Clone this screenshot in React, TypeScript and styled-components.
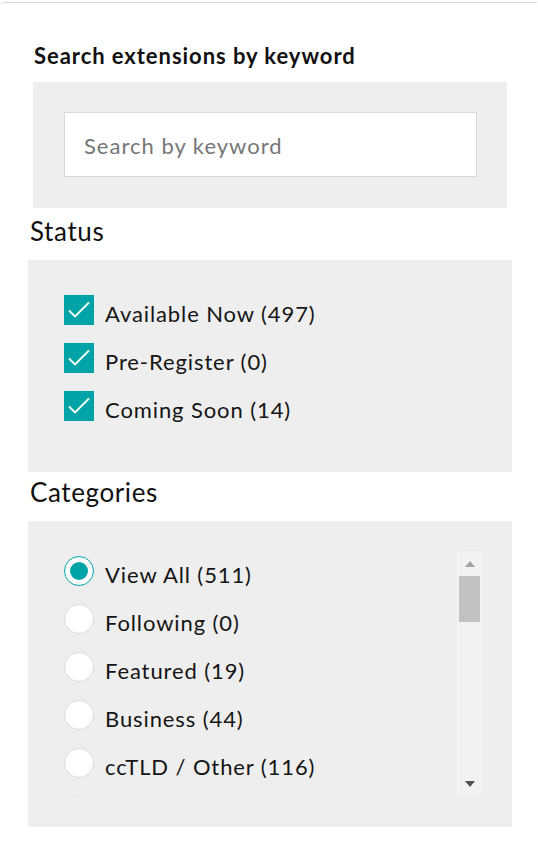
import React from "react";
import styled, { createGlobalStyle } from "styled-components";

const GlobalStyle = createGlobalStyle`
  html, body { margin: 0; padding: 0; background: #ffffff; }
  body { font-family: Lato, "Open Sans", Arial, sans-serif; color: #111111; }
  * { box-sizing: border-box; }
`;

const Card = styled.div`
  margin-top: 2px;
  border-top: 1px solid #d4dbe0;
  border-top-left-radius: 5px;
  width: 537px;
  padding-top: 39px;
  padding-bottom: 22px;
`;

const SearchSection = styled.section`
  margin-left: 33px;
  width: 474px;
`;

const SearchTitle = styled.h2`
  margin: 0 0 0 1px;
  height: 40px;
  font-size: 22px;
  line-height: 28px;
  font-weight: 700;
  letter-spacing: 0.95px;
  color: #111111;
`;

const Panel = styled.div<{ $pt: number; $pb: number; $pl: number; $pr: number }>`
  background: #eeeeee;
  padding: ${(p) => `${p.$pt}px ${p.$pr}px ${p.$pb}px ${p.$pl}px`};
`;

const SearchInput = styled.input`
  display: block;
  width: 100%;
  height: 65px;
  border: 1px solid #d4dbe0;
  background: #ffffff;
  padding: 2px 19px 0;
  font-family: Lato, "Open Sans", Arial, sans-serif;
  font-size: 22px;
  letter-spacing: 1px;
  color: #111111;
  outline: none;
  &::placeholder { color: #767676; }
`;

const FilterSection = styled.section`
  margin-left: 28px;
  width: 484px;
`;

const FilterTitle = styled.h3<{ $mt: number }>`
  margin: ${(p) => p.$mt}px 0 13px 2px;
  font-size: 26px;
  line-height: 32px;
  font-weight: 400;
  letter-spacing: 0.6px;
  color: #111111;
`;

const OptionList = styled.div`
  display: flex;
  flex-direction: column;
  gap: 18px;
`;

const OptionRow = styled.label`
  display: flex;
  align-items: flex-start;
  height: 30px;
  gap: 11px;
  cursor: pointer;
`;

const OptionText = styled.span`
  font-size: 22px;
  line-height: 24px;
  padding-top: 7px;
  letter-spacing: 0.9px;
  color: #151515;
  white-space: nowrap;
`;

const CheckBox = styled.span`
  flex: none;
  width: 30px;
  height: 30px;
  background: #00a4a6;
  display: flex;
  align-items: center;
  justify-content: center;
`;

const RadioCircle = styled.span<{ $checked: boolean }>`
  flex: none;
  width: 30px;
  height: 30px;
  border-radius: 50%;
  background: #ffffff;
  border: 1px solid ${(p) => (p.$checked ? "#00a4a6" : "#d6dce1")};
  display: flex;
  align-items: center;
  justify-content: center;
  &::after {
    content: "";
    display: ${(p) => (p.$checked ? "block" : "none")};
    width: 18px;
    height: 18px;
    border-radius: 50%;
    background: #00a4a6;
  }
`;

const ScrollFrame = styled.div`
  display: flex;
  height: 246px;
`;

const ScrollViewport = styled.div`
  flex: 1;
  overflow: hidden;
  padding: 5px 0 0 6px;
`;

const ScrollTrack = styled.div`
  flex: none;
  width: 25px;
  background: #f2f2f2;
  display: flex;
  flex-direction: column;
  align-items: center;
  justify-content: space-between;
  padding: 10px 0 10px;
`;

const TrackTop = styled.div`
  display: flex;
  flex-direction: column;
  align-items: center;
  gap: 9px;
`;

const Arrow = styled.span<{ $dir: "up" | "down"; $color: string }>`
  width: 0;
  height: 0;
  border-left: 5.5px solid transparent;
  border-right: 5.5px solid transparent;
  ${(p) =>
    p.$dir === "up"
      ? `border-bottom: 6px solid ${p.$color};`
      : `border-top: 6px solid ${p.$color};`}
`;

const Thumb = styled.span`
  width: 21px;
  height: 46px;
  background: #c1c1c1;
`;

const CheckIcon = () => (
  <svg width="30" height="30" viewBox="0 0 30 30" aria-hidden="true">
    <path d="M5 15.5 L11 21.5 L25 7.5" fill="none" stroke="#ffffff" strokeWidth="1.8" />
  </svg>
);

const statuses = [
  "Available Now (497)",
  "Pre-Register (0)",
  "Coming Soon (14)",
];

const categories = [
  "View All (511)",
  "Following (0)",
  "Featured (19)",
  "Business (44)",
  "ccTLD / Other (116)",
  "Cities (70)",
];

export default function App() {
  return (
    <>
      <GlobalStyle />
      <Card>
        <SearchSection>
          <SearchTitle>Search extensions by keyword</SearchTitle>
          <Panel $pt={30} $pb={31} $pl={31} $pr={30}>
            <SearchInput placeholder="Search by keyword" />
          </Panel>
        </SearchSection>

        <FilterSection>
          <FilterTitle $mt={7}>Status</FilterTitle>
          <Panel $pt={35} $pb={51} $pl={36} $pr={36}>
            <OptionList>
              {statuses.map((s) => (
                <OptionRow key={s}>
                  <CheckBox>
                    <CheckIcon />
                  </CheckBox>
                  <OptionText>{s}</OptionText>
                </OptionRow>
              ))}
            </OptionList>
          </Panel>

          <FilterTitle $mt={4}>Categories</FilterTitle>
          <Panel $pt={30} $pb={30} $pl={30} $pr={30}>
            <ScrollFrame>
              <ScrollViewport>
                <OptionList>
                  {categories.map((c, i) => (
                    <OptionRow key={c}>
                      <RadioCircle $checked={i === 0} />
                      <OptionText>{c}</OptionText>
                    </OptionRow>
                  ))}
                </OptionList>
              </ScrollViewport>
              <ScrollTrack>
                <TrackTop>
                  <Arrow $dir="up" $color="#a3a3a3" />
                  <Thumb />
                </TrackTop>
                <Arrow $dir="down" $color="#505050" />
              </ScrollTrack>
            </ScrollFrame>
          </Panel>
        </FilterSection>
      </Card>
    </>
  );
}
